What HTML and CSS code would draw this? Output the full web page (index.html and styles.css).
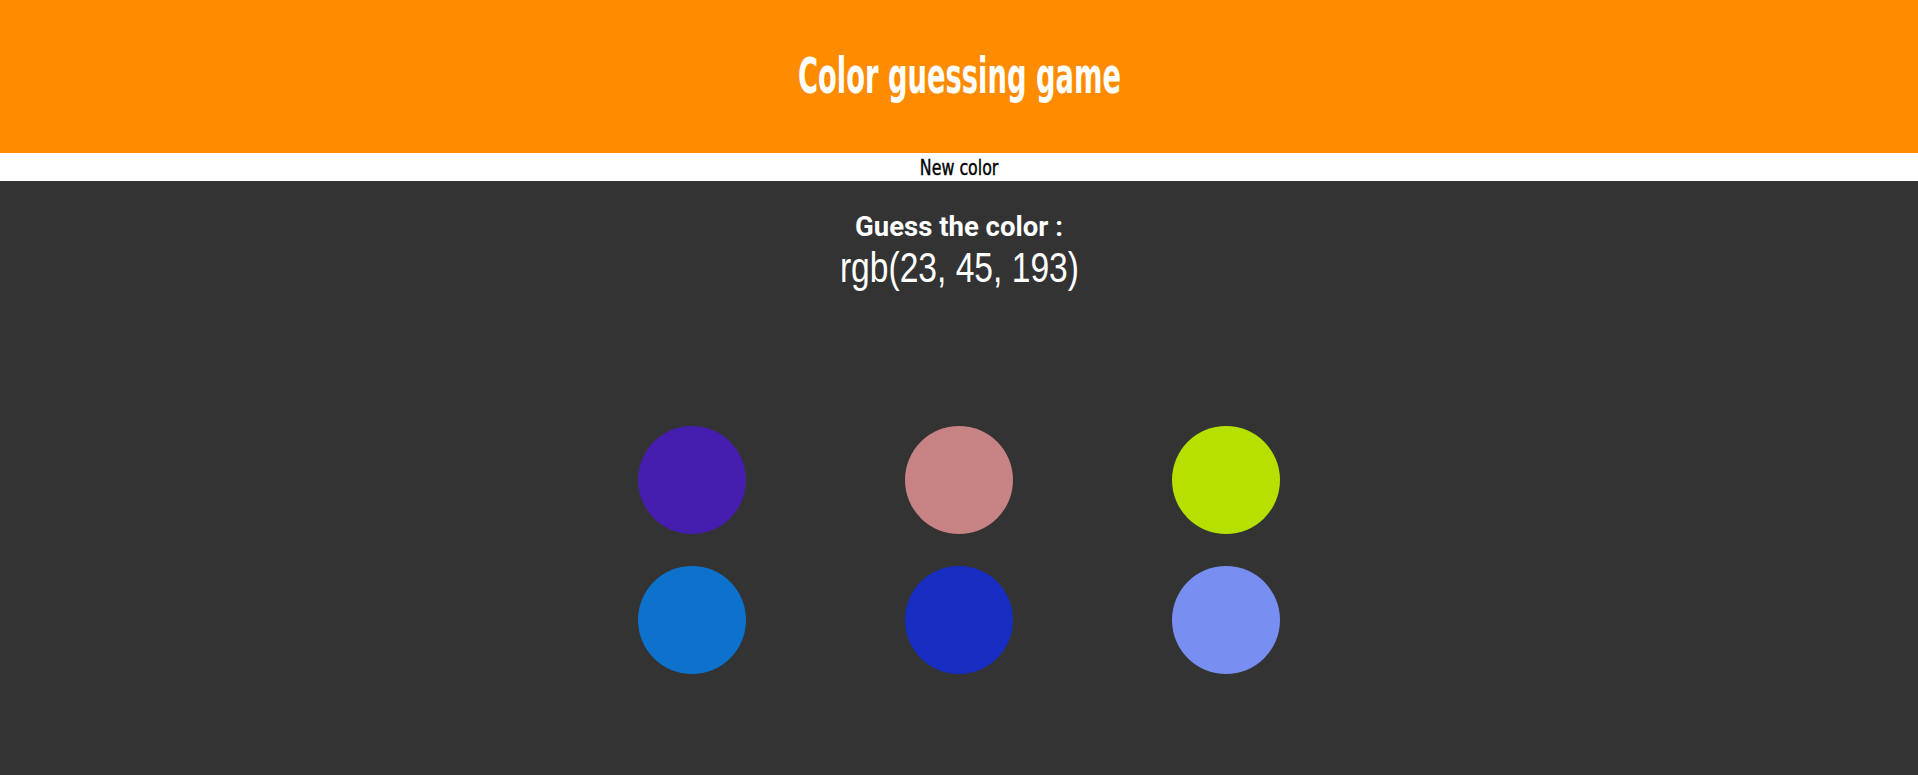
FILE: index.html
```html
<!DOCTYPE html>
<html>
<head>
<meta charset="utf-8">
<link rel="stylesheet" href="styles.css">
</head>
<body>
<header class="header"><h1 class="title">Color guessing game</h1></header>
<div class="bar"><button class="new-btn">New color</button></div>
<main class="main">
  <p class="prompt">Guess the color :</p>
  <p class="rgb">rgb(23, 45, 193)</p>
  <div class="grid">
    <div class="dot" style="background: rgb(69, 30, 176)"></div>
    <div class="dot" style="background: rgb(200, 131, 133)"></div>
    <div class="dot" style="background: rgb(181, 224, 0)"></div>
    <div class="dot" style="background: rgb(12, 114, 204)"></div>
    <div class="dot" style="background: rgb(23, 45, 193)"></div>
    <div class="dot" style="background: rgb(121, 142, 241)"></div>
  </div>
</main>
</body>
</html>
```
FILE: styles.css
```css
html, body { margin: 0; padding: 0; }
body { background: #333333; height: 775px; overflow: hidden; }
.header {
  background: #ff8c00;
  height: 153px;
  display: flex;
  align-items: center;
  justify-content: center;
}
.title {
  margin: 0;
  color: #fff;
  font-family: "DejaVu Sans Condensed", sans-serif;
  font-weight: bold;
  font-size: 49px;
  transform: scaleX(0.62);
  letter-spacing: 0;
}
.bar {
  background: #fff;
  height: 28px;
  display: flex;
  justify-content: center;
  align-items: center;
}
.new-btn {
  background: none;
  border: 0;
  padding: 0;
  font-family: "Liberation Sans Narrow", "DejaVu Sans Condensed", sans-serif;
  font-size: 22px;
  font-weight: 400;
  color: #000;
  transform: scaleX(0.8);
  -webkit-text-stroke: 0.4px #000;
}
.main {
  display: flex;
  flex-direction: column;
  align-items: center;
}
.prompt {
  margin: 30px 0 0;
  color: #fff;
  font-family: Roboto, sans-serif;
  font-weight: bold;
  font-size: 27.5px;
  line-height: 32px;
}
.rgb {
  margin: 0;
  color: #fff;
  font-family: "Liberation Sans Narrow", sans-serif;
  font-size: 42px;
  line-height: 50px;
  transform: scaleX(0.8);
}
.grid {
  margin-top: 133px;
  display: grid;
  grid-template-columns: repeat(3, 108px);
  column-gap: 159px;
  row-gap: 32px;
}
.dot {
  width: 108px;
  height: 108px;
  border-radius: 50%;
}
```
